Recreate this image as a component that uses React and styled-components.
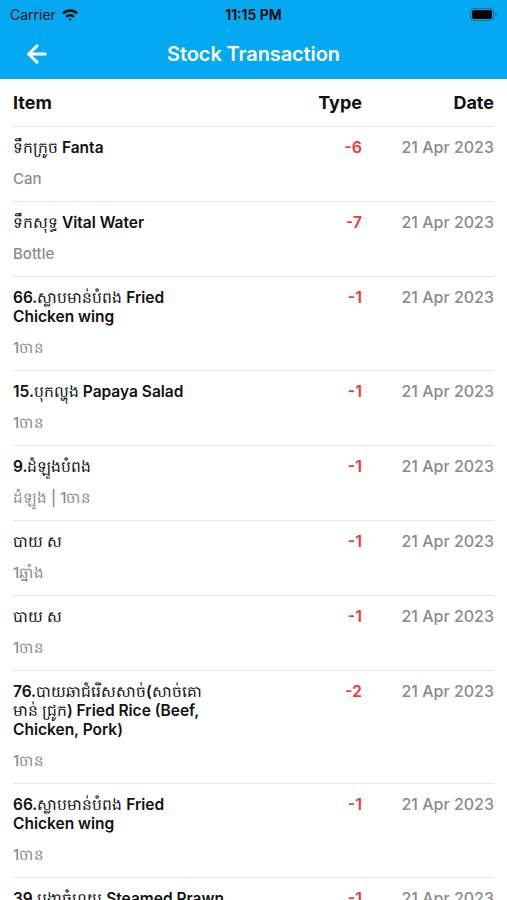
import styled, { createGlobalStyle } from 'styled-components'
import { ArrowLeft } from 'lucide-react'

const GlobalStyle = createGlobalStyle`
    html, body {
        margin: 0;
        padding: 0;
        background: #fff;
    }
    body {
        font-family: Inter, "Noto Sans", "Liberation Sans", sans-serif;
        font-synthesis: none;
        -webkit-font-smoothing: antialiased;
    }
`

const Screen = styled.div`
    width: 507px;
    height: 900px;
    overflow: hidden;
    background: #fff;
`

const Header = styled.header`
    background: #05a9f2;
    color: #fff;
`

const StatusBar = styled.div`
    height: 28px;
    display: grid;
    grid-template-columns: 1fr auto 1fr;
    align-items: center;
    padding: 0 10px 0 10px;
    font-size: 14px;
    color: #111;

    & .left {
        display: flex;
        align-items: center;
        gap: 5px;
    }

    & .time {
        font-weight: 600;
        color: #000;
    }

    & .right {
        display: flex;
        justify-content: flex-end;
    }
`

const NavBar = styled.div`
    height: 51px;
    display: grid;
    grid-template-columns: 60px 1fr 60px;
    align-items: center;

    & button {
        background: none;
        border: none;
        padding: 0 0 0 23px;
        color: #fff;
        display: flex;
        align-items: center;
    }

    & h1 {
        margin: 0;
        text-align: center;
        font-size: 20px;
        font-weight: 600;
        letter-spacing: -0.1px;
    }
`

const Table = styled.div`
    padding: 0 13px;
`

const Row = styled.div`
    display: grid;
    grid-template-columns: 214px 135px 132px;
    align-items: start;
    border-bottom: 1px solid #e6e6e6;
    padding: ${p => p.$head ? '13px 0 12px' : '11px 0 12px'};
`

const HeadCell = styled.div`
    font-size: 18px;
    line-height: 22px;
    font-weight: 700;
    color: #111;
    text-align: ${p => p.$align || 'left'};
`

const ItemCell = styled.div`
    display: flex;
    flex-direction: column;
    gap: 12px;

    & .name {
        font-size: 15.5px;
        line-height: 19px;
        font-weight: 600;
        color: #111;
    }

    & .unit {
        font-size: 15px;
        line-height: 20px;
        font-weight: 500;
        color: #8c8c8c;
    }
`

const Qty = styled.div`
    text-align: right;
    font-size: 16px;
    line-height: 19px;
    font-weight: 600;
    color: #e8393b;
`

const DateCell = styled.div`
    text-align: right;
    font-size: 16px;
    line-height: 19px;
    font-weight: 500;
    color: #8a8a8a;
`

const transactions = [
    { name: 'ទឹកក្រូច Fanta', unit: 'Can', qty: -6 },
    { name: 'ទឹកសុទ្ធ Vital Water', unit: 'Bottle', qty: -7 },
    { name: '66.ស្លាបមាន់បំពង Fried Chicken wing', unit: '1ចាន', qty: -1 },
    { name: '15.បុកល្ហុង Papaya Salad', unit: '1ចាន', qty: -1 },
    { name: '9.ដំឡូងបំពង', unit: 'ដំឡូង | 1ចាន', qty: -1 },
    { name: 'បាយ ស', unit: '1ឆ្នាំង', qty: -1 },
    { name: 'បាយ ស', unit: '1ចាន', qty: -1 },
    { name: '76.បាយឆាជំរើសសាច់(សាច់គោ មាន់ ជ្រូក) Fried Rice (Beef, Chicken, Pork)', unit: '1ចាន', qty: -2 },
    { name: '66.ស្លាបមាន់បំពង Fried Chicken wing', unit: '1ចាន', qty: -1 },
    { name: '39.បង្គាចំហុយ Steamed Prawn', unit: '1ចាន', qty: -1 },
]

const Wifi = () => (
    <svg width="18" height="13" viewBox="0 0 18 13">
        <path d="M1 4.6 A11.5 11.5 0 0 1 17 4.6 L15.2 6.5 A9 9 0 0 0 2.8 6.5 Z" fill="#111" />
        <path d="M4.2 7.9 A7 7 0 0 1 13.8 7.9 L12 9.8 A4.4 4.4 0 0 0 6 9.8 Z" fill="#111" />
        <path d="M7.4 11.1 A2.5 2.5 0 0 1 10.6 11.1 L9 12.8 Z" fill="#111" />
    </svg>
)

const Battery = () => (
    <svg width="27" height="13" viewBox="0 0 27 13">
        <rect x="0.5" y="0.5" width="23" height="12" rx="3.5" fill="none" stroke="#333" strokeOpacity="0.5" />
        <rect x="2" y="2" width="20" height="9" rx="2" fill="#000" />
        <path d="M25 4.5 a2 2 0 0 1 0 4 Z" fill="#333" fillOpacity="0.5" />
    </svg>
)

const App = () => {
    return <Screen>
        <GlobalStyle />
        <Header>
            <StatusBar>
                <div className="left">Carrier <Wifi /></div>
                <div className="time">11:15 PM</div>
                <div className="right"><Battery /></div>
            </StatusBar>
            <NavBar>
                <button aria-label="Back"><ArrowLeft size={28} strokeWidth={2.6} /></button>
                <h1>Stock Transaction</h1>
                <span />
            </NavBar>
        </Header>
        <Table>
            <Row $head>
                <HeadCell>Item</HeadCell>
                <HeadCell $align="right">Type</HeadCell>
                <HeadCell $align="right">Date</HeadCell>
            </Row>
            {transactions.map((t, i) => (
                <Row key={i}>
                    <ItemCell>
                        <div className="name">{t.name}</div>
                        <div className="unit">{t.unit}</div>
                    </ItemCell>
                    <Qty>{t.qty}</Qty>
                    <DateCell>21 Apr 2023</DateCell>
                </Row>
            ))}
        </Table>
    </Screen>
}

export default App
